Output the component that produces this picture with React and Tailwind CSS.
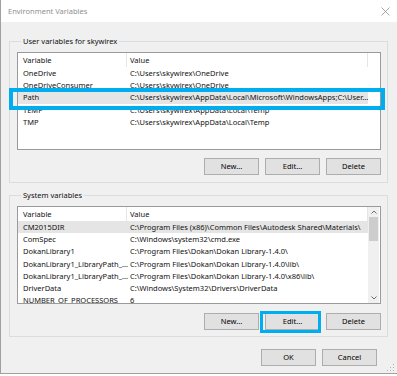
import React from "react";

const userRows = [
  ["OneDrive", "C:\\Users\\skywirex\\OneDrive"],
  ["OneDriveConsumer", "C:\\Users\\skywirex\\OneDrive"],
  ["Path", "C:\\Users\\skywirex\\AppData\\Local\\Microsoft\\WindowsApps;C:\\User...", true],
  ["TEMP", "C:\\Users\\skywirex\\AppData\\Local\\Temp"],
  ["TMP", "C:\\Users\\skywirex\\AppData\\Local\\Temp"],
];

const sysRows = [
  ["CM2015DIR", "C:\\Program Files (x86)\\Common Files\\Autodesk Shared\\Materials\\", true],
  ["ComSpec", "C:\\Windows\\system32\\cmd.exe"],
  ["DokanLibrary1", "C:\\Program Files\\Dokan\\Dokan Library-1.4.0\\"],
  ["DokanLibrary1_LibraryPath_...", "C:\\Program Files\\Dokan\\Dokan Library-1.4.0\\lib\\"],
  ["DokanLibrary1_LibraryPath_...", "C:\\Program Files\\Dokan\\Dokan Library-1.4.0\\x86\\lib\\"],
  ["DriverData", "C:\\Windows\\System32\\Drivers\\DriverData"],
  ["NUMBER_OF_PROCESSORS", "6"],
];

function Header() {
  return (
    <div className="flex h-[14px] items-center w-[350px] shrink-0">
      <div className="w-[109px] h-full flex items-center pl-[5px] border-r border-[#e5e5e5] shrink-0">Variable</div>
      <div className="w-[241px] h-full flex items-center pl-[3px] border-r border-[#e5e5e5] shrink-0">Value</div>
    </div>
  );
}

function Row({ name, value, sel }) {
  return (
    <div className={sel ? "flex h-[12.3px] items-center w-[350px] shrink-0 bg-[#e5e5e5]" : "flex h-[12.3px] items-center w-[350px] shrink-0"}>
      <div className="w-[109px] pl-[5px] shrink-0 whitespace-nowrap">{name}</div>
      <div className="pl-[3px] whitespace-nowrap">{value}</div>
    </div>
  );
}

function Btn({ children }) {
  return (
    <div className="w-[55px] h-[17px] bg-[#e1e1e1] border border-[#adadad] flex items-center justify-center text-black">
      {children}
    </div>
  );
}

export default function App() {
  return (
    <div className="relative w-[397px] h-[376px] bg-white overflow-hidden text-[7.5px] leading-[11px] text-[#111] font-['Segoe_UI','Noto_Sans',sans-serif]">
      <div className="h-[374px] flex flex-col border-l border-b border-[#a0a0a0] bg-[#f0f0f0]">
        {/* title bar */}
        <div className="h-[22px] bg-white flex items-center justify-between pl-[7px] pr-[8px] shrink-0">
          <span className="text-[#8f8f8f] text-[7.5px]">Environment Variables</span>
          <svg width="9" height="9" viewBox="0 0 9 9" className="mr-[-1px]">
            <path d="M0.5 0.5 L8.5 8.5 M8.5 0.5 L0.5 8.5" stroke="#8f8f8f" strokeWidth="0.8" fill="none" />
          </svg>
        </div>

        {/* body */}
        <div className="flex flex-col pl-[8px] pr-[9px]">
          <fieldset className="mt-[14px] border border-[#dcdcdc] pl-[7px] pr-[6px] pb-[7px]">
            <legend className="ml-[4px] px-[2px] leading-[11px]">User variables for skywirex</legend>
            <div className="mt-[5px] h-[98px] border border-[#9a9a9a] bg-white overflow-hidden flex flex-col">
              <Header />
              {userRows.map((r, i) => (
                <Row key={i} name={r[0]} value={r[1]} sel={r[2]} />
              ))}
            </div>
            <div className="mt-[8px] flex justify-end gap-[6px]">
              <Btn>New...</Btn>
              <Btn>Edit...</Btn>
              <Btn>Delete</Btn>
            </div>
          </fieldset>

          <fieldset className="mt-[7px] border border-[#dcdcdc] pl-[7px] pr-[6px] pb-[6px]">
            <legend className="ml-[4px] px-[2px] leading-[11px]">System variables</legend>
            <div className="mt-[5px] h-[98px] border border-[#9a9a9a] bg-white overflow-hidden flex">
              <div className="flex flex-col w-[350px] overflow-hidden">
                <Header />
                {sysRows.map((r, i) => (
                  <Row key={i} name={r[0]} value={r[1]} sel={r[2]} />
                ))}
              </div>
              <div className="w-[11px] bg-[#f0f0f0] flex flex-col items-center">
                <div className="h-[10px] flex items-center justify-center">
                  <svg width="6" height="4" viewBox="0 0 6 4"><path d="M0.5 3.5 L3 1 L5.5 3.5" stroke="#606060" strokeWidth="0.9" fill="none" /></svg>
                </div>
                <div className="w-[9px] h-[24px] bg-[#cdcdcd]"></div>
                <div className="flex-1"></div>
                <div className="h-[10px] flex items-center justify-center">
                  <svg width="6" height="4" viewBox="0 0 6 4"><path d="M0.5 0.5 L3 3 L5.5 0.5" stroke="#606060" strokeWidth="0.9" fill="none" /></svg>
                </div>
              </div>
            </div>
            <div className="mt-[9px] flex justify-end gap-[6px]">
              <Btn>New...</Btn>
              <Btn>Edit...</Btn>
              <Btn>Delete</Btn>
            </div>
          </fieldset>

          <div className="mt-[12px] flex justify-end gap-[6px] pr-[11px]">
            <Btn>OK</Btn>
            <Btn>Cancel</Btn>
          </div>
        </div>
      </div>

      {/* resize grip */}
      <svg width="8" height="8" viewBox="0 0 8 8" className="absolute right-[2px] bottom-[4px]">
        <rect x="6" y="0" width="1" height="1" fill="#b0b0b0" />
        <rect x="3" y="3" width="1" height="1" fill="#b0b0b0" />
        <rect x="6" y="3" width="1" height="1" fill="#b0b0b0" />
        <rect x="0" y="6" width="1" height="1" fill="#b0b0b0" />
        <rect x="3" y="6" width="1" height="1" fill="#b0b0b0" />
        <rect x="6" y="6" width="1" height="1" fill="#b0b0b0" />
      </svg>

      {/* highlight overlays */}
      <div className="absolute left-[9px] top-[88px] w-[376px] h-[22px] border-[4px] border-[#00aeef]"></div>
      <div className="absolute left-[260px] top-[311px] w-[61px] h-[22px] border-[3px] border-[#00aeef]"></div>
    </div>
  );
}
